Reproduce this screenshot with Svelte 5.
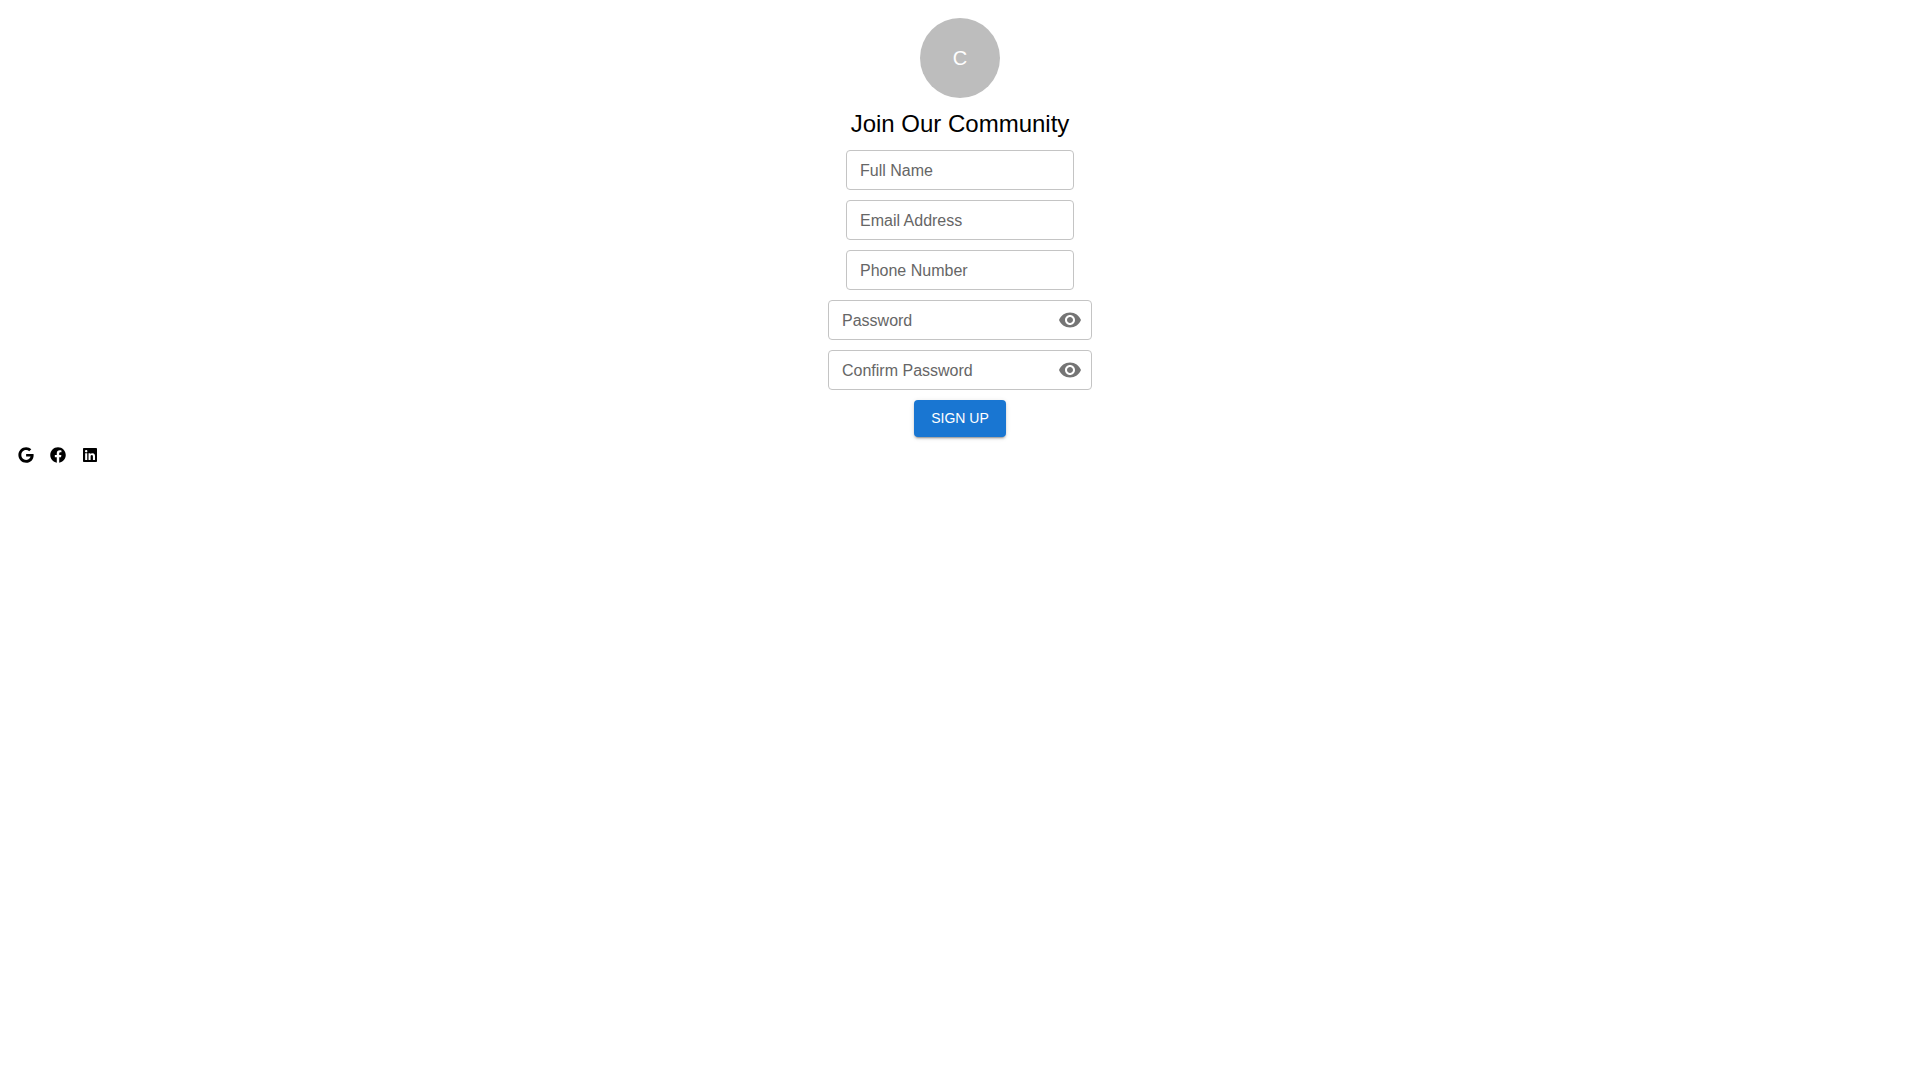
<script lang="ts">
  let values = $state({ name: '', email: '', phone: '', password: '', confirm: '' });
  let visible = $state({ password: false, confirm: false });

  const textFields = [
    { id: 'name', label: 'Full Name', type: 'text' },
    { id: 'email', label: 'Email Address', type: 'email' },
    { id: 'phone', label: 'Phone Number', type: 'tel' },
  ] as const;

  const passwordFields = [
    { id: 'password', label: 'Password' },
    { id: 'confirm', label: 'Confirm Password' },
  ] as const;

  const socials = [
    {
      name: 'Google',
      viewBox: '-12 0 512 512',
      path: 'M488 261.8C488 403.3 391.1 504 248 504 110.8 504 0 393.2 0 256S110.8 8 248 8c66.8 0 123 24.5 166.3 64.9l-67.5 64.9C258.5 52.6 94.3 116.6 94.3 256c0 86.5 69.1 156.6 153.7 156.6 98.2 0 135-70.4 140.8-106.9H248v-85.3h236.1c2.3 12.7 3.9 24.9 3.9 41.4z',
    },
    {
      name: 'Facebook',
      viewBox: '0 0 512 512',
      path: 'M504 256C504 119 393 8 256 8S8 119 8 256c0 123.78 90.69 226.38 209.25 245V327.69h-63V256h63v-54.64c0-62.15 37-96.48 93.67-96.48 27.14 0 55.52 4.84 55.52 4.84v61h-31.28c-30.8 0-40.41 19.12-40.41 38.73V256h68.78l-11 71.69h-57.78V501C413.31 482.38 504 379.78 504 256z',
    },
    {
      name: 'LinkedIn',
      viewBox: '-32 0 512 512',
      path: 'M416 32H31.9C14.3 32 0 46.5 0 64.3v383.4C0 465.5 14.3 480 31.9 480H416c17.6 0 32-14.5 32-32.3V64.3c0-17.8-14.4-32.3-32-32.3zM135.4 416H69V202.2h66.5V416zm-33.2-243c-21.3 0-38.5-17.3-38.5-38.5S80.9 96 102.2 96c21.2 0 38.5 17.3 38.5 38.5 0 21.3-17.2 38.5-38.5 38.5zm282.1 243h-66.4V312c0-24.8-.5-56.7-34.5-56.7-34.6 0-39.9 27-39.9 54.9V416h-66.4V202.2h63.7v29.2h.9c8.9-16.8 30.6-34.5 62.9-34.5 67.2 0 79.7 44.3 79.7 101.9V416z',
    },
  ];
</script>

<main class="page">
  <div class="avatar">C</div>
  <h1>Join Our Community</h1>

  <form onsubmit={(e) => e.preventDefault()}>
    {#each textFields as field}
      <div class="field">
        <input id={field.id} type={field.type} placeholder=" " bind:value={values[field.id]} />
        <label for={field.id}>{field.label}</label>
      </div>
    {/each}

    {#each passwordFields as field}
      <div class="field secret">
        <input
          id={field.id}
          type={visible[field.id] ? 'text' : 'password'}
          placeholder=" "
          bind:value={values[field.id]}
        />
        <label for={field.id}>{field.label}</label>
        <button
          class="toggle"
          type="button"
          aria-label="Toggle {field.label} visibility"
          onclick={() => (visible[field.id] = !visible[field.id])}
        >
          <svg viewBox="0 0 24 24" aria-hidden="true">
            <path d="M12 4.5C7 4.5 2.73 7.61 1 12c1.73 4.39 6 7.5 11 7.5s9.27-3.11 11-7.5c-1.73-4.39-6-7.5-11-7.5M12 17c-2.76 0-5-2.24-5-5s2.24-5 5-5 5 2.24 5 5-2.24 5-5 5m0-8c-1.66 0-3 1.34-3 3s1.34 3 3 3 3-1.34 3-3-1.34-3-3-3" />
          </svg>
        </button>
      </div>
    {/each}

    <button class="submit" type="submit">Sign up</button>
  </form>

  <nav class="socials" aria-label="Social sign up">
    {#each socials as social}
      <a href="#{social.name.toLowerCase()}" aria-label={social.name}>
        <svg viewBox={social.viewBox} aria-hidden="true"><path d={social.path} /></svg>
      </a>
    {/each}
  </nav>
</main>

<style>
  :global(body) {
    margin: 0;
    background: #fff;
  }

  .page {
    display: flex;
    flex-direction: column;
    align-items: center;
    gap: 10px;
    padding: 18px;
    color: #000;
    font-family: 'Liberation Sans', Arial, sans-serif;
  }

  .avatar {
    display: grid;
    place-items: center;
    width: 80px;
    height: 80px;
    border-radius: 50%;
    background: #bdbdbd;
    color: #fff;
    font-size: 20px;
    line-height: 20px;
  }

  h1 {
    margin: 0;
    font-size: 24px;
    font-weight: 400;
    line-height: 32px;
  }

  form {
    display: flex;
    flex-direction: column;
    align-items: center;
    gap: 10px;
  }

  .field {
    display: grid;
    align-items: center;
    box-sizing: border-box;
    width: 228px;
    max-width: 100%;
    height: 40px;
    border: 1px solid #c4c4c4;
    border-radius: 4px;
  }

  .field.secret {
    grid-template-columns: 1fr auto;
    width: 264px;
    padding-right: 9px;
  }

  .field:focus-within {
    border-color: #1976d2;
  }

  input {
    grid-area: 1 / 1;
    box-sizing: border-box;
    width: 100%;
    height: 100%;
    min-width: 0;
    padding: 2px 13px 0;
    border: 0;
    outline: 0;
    background: transparent;
    font: inherit;
    font-size: 16px;
  }

  label {
    grid-area: 1 / 1;
    padding: 2px 0 0 13px;
    color: #666;
    font-size: 16px;
    line-height: 24px;
    pointer-events: none;
  }

  input:not(:placeholder-shown) + label {
    visibility: hidden;
  }

  .toggle {
    display: flex;
    padding: 0;
    border: 0;
    background: none;
    cursor: pointer;
  }

  .toggle svg {
    width: 24px;
    height: 24px;
    fill: #757575;
  }

  .submit {
    padding: 6px 17px;
    border: 0;
    border-radius: 4px;
    background: #1976d2;
    box-shadow:
      0 3px 1px -2px rgba(0, 0, 0, 0.2),
      0 2px 2px 0 rgba(0, 0, 0, 0.14),
      0 1px 5px 0 rgba(0, 0, 0, 0.12);
    color: #fff;
    font: inherit;
    font-size: 14px;
    line-height: 25px;
    text-transform: uppercase;
    cursor: pointer;
  }

  .socials {
    display: flex;
    align-self: flex-start;
    gap: 16px;
  }

  .socials a {
    display: flex;
    color: #000;
  }

  .socials svg {
    width: 16px;
    height: 16px;
    fill: currentColor;
  }
</style>
